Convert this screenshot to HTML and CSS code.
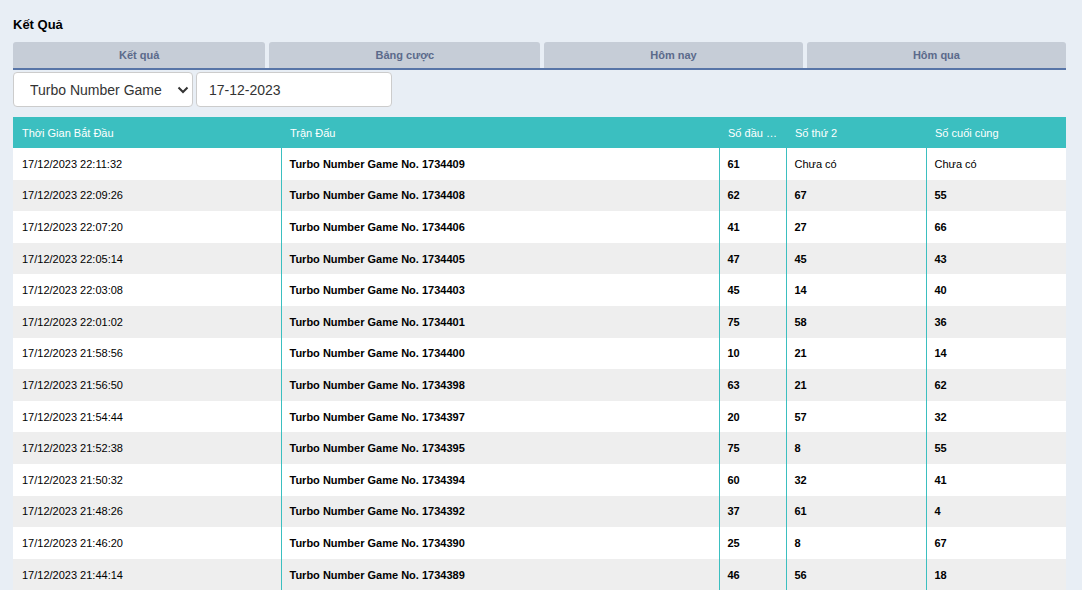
FILE: index.html
```html
<!DOCTYPE html>
<html lang="vi">
<head>
<meta charset="utf-8">
<title>Kết Quả</title>
<link rel="stylesheet" href="styles.css">
</head>
<body>
<div class="page">
  <h1 class="title">Kết Quả</h1>
  <div class="tabs">
    <div class="tab">Kết quả</div>
    <div class="tab">Bảng cược</div>
    <div class="tab">Hôm nay</div>
    <div class="tab">Hôm qua</div>
  </div>
  <div class="filters">
    <div class="select-wrap">
      <select class="game-select">
        <option>Turbo Number Game</option>
      </select>
      <svg class="chev" width="12" height="8" viewBox="0 0 12 8"><path d="M1.5 1.5 L6 6 L10.5 1.5" fill="none" stroke="#333" stroke-width="2"/></svg>
    </div>
    <input class="date-input" type="text" value="17-12-2023">
  </div>
  <table class="results">
    <colgroup>
      <col class="c1"><col class="c2"><col class="c3"><col class="c4"><col class="c5">
    </colgroup>
    <thead>
      <tr><th>Thời Gian Bắt Đầu</th><th>Trận Đấu</th><th>Số đầu tiên</th><th>Số thứ 2</th><th>Số cuối cùng</th></tr>
    </thead>
    <tbody>
      <tr><td>17/12/2023 22:11:32</td><td>Turbo Number Game No. 1734409</td><td>61</td><td class="pending">Chưa có</td><td class="pending">Chưa có</td></tr>
      <tr><td>17/12/2023 22:09:26</td><td>Turbo Number Game No. 1734408</td><td>62</td><td>67</td><td>55</td></tr>
      <tr><td>17/12/2023 22:07:20</td><td>Turbo Number Game No. 1734406</td><td>41</td><td>27</td><td>66</td></tr>
      <tr><td>17/12/2023 22:05:14</td><td>Turbo Number Game No. 1734405</td><td>47</td><td>45</td><td>43</td></tr>
      <tr><td>17/12/2023 22:03:08</td><td>Turbo Number Game No. 1734403</td><td>45</td><td>14</td><td>40</td></tr>
      <tr><td>17/12/2023 22:01:02</td><td>Turbo Number Game No. 1734401</td><td>75</td><td>58</td><td>36</td></tr>
      <tr><td>17/12/2023 21:58:56</td><td>Turbo Number Game No. 1734400</td><td>10</td><td>21</td><td>14</td></tr>
      <tr><td>17/12/2023 21:56:50</td><td>Turbo Number Game No. 1734398</td><td>63</td><td>21</td><td>62</td></tr>
      <tr><td>17/12/2023 21:54:44</td><td>Turbo Number Game No. 1734397</td><td>20</td><td>57</td><td>32</td></tr>
      <tr><td>17/12/2023 21:52:38</td><td>Turbo Number Game No. 1734395</td><td>75</td><td>8</td><td>55</td></tr>
      <tr><td>17/12/2023 21:50:32</td><td>Turbo Number Game No. 1734394</td><td>60</td><td>32</td><td>41</td></tr>
      <tr><td>17/12/2023 21:48:26</td><td>Turbo Number Game No. 1734392</td><td>37</td><td>61</td><td>4</td></tr>
      <tr><td>17/12/2023 21:46:20</td><td>Turbo Number Game No. 1734390</td><td>25</td><td>8</td><td>67</td></tr>
      <tr><td>17/12/2023 21:44:14</td><td>Turbo Number Game No. 1734389</td><td>46</td><td>56</td><td>18</td></tr>
    </tbody>
  </table>
</div>
</body>
</html>
```
FILE: styles.css
```css
* { box-sizing: border-box; }
html, body {
  margin: 0;
  background: #e8eef5;
  font-family: "Liberation Sans", Arial, sans-serif;
  color: #000;
}
.page {
  padding: 15px 16px 0 13px;
}
.title {
  margin: 0 0 7px 0;
  font-size: 13px;
  line-height: 20px;
  font-weight: bold;
}
.tabs {
  display: flex;
  gap: 4px;
  border-bottom: 2px solid #5875a7;
}
.tab {
  flex: 1 1 auto;
  height: 26px;
  line-height: 26px;
  background: #c6cdd7;
  border-radius: 3px 3px 0 0;
  text-align: center;
  font-size: 11px;
  font-weight: bold;
  color: #5b6a8b;
  padding: 0 10px;
}
.filters {
  display: flex;
  gap: 3px;
  margin-top: 2px;
}
.select-wrap {
  position: relative;
  width: 180px;
  height: 35px;
}
.game-select {
  appearance: none;
  -webkit-appearance: none;
  width: 100%;
  height: 35px;
  border: 1px solid #cccccc;
  border-radius: 4px;
  background: #fff;
  font-family: "Liberation Sans", Arial, sans-serif;
  font-size: 14px;
  color: #333;
  padding: 0 0 0 16px;
}
.chev {
  position: absolute;
  right: 4px;
  top: 14px;
  pointer-events: none;
}
.date-input {
  width: 196px;
  height: 35px;
  border: 1px solid #cccccc;
  border-radius: 4px;
  background: #fff;
  font-family: "Liberation Sans", Arial, sans-serif;
  font-size: 14px;
  color: #333;
  padding: 0 0 0 12px;
}
.results {
  margin-top: 10px;
  width: 1053px;
  table-layout: fixed;
  border-collapse: collapse;
  font-size: 11px;
}
.c1 { width: 268px; }
.c2 { width: 438px; }
.c3 { width: 67px; }
.c4 { width: 140px; }
.c5 { width: 140px; }
.results th {
  background: #3bbfc0;
  color: #fff;
  font-weight: normal;
  text-align: left;
  height: 31px;
  padding: 0 9px;
  white-space: nowrap;
  overflow: hidden;
  text-overflow: ellipsis;
}
.results td {
  height: 31.6px;
  padding: 0 8px;
  font-weight: bold;
  background: #fff;
  white-space: nowrap;
  overflow: hidden;
}
.results td:first-child,
.results td.pending {
  font-weight: normal;
}
.results td:first-child {
  padding-left: 9px;
}
.results td + td {
  border-left: 1px solid #3bbfc0;
}
.results tbody tr:nth-child(even) td {
  background: #eeeeee;
}
```
